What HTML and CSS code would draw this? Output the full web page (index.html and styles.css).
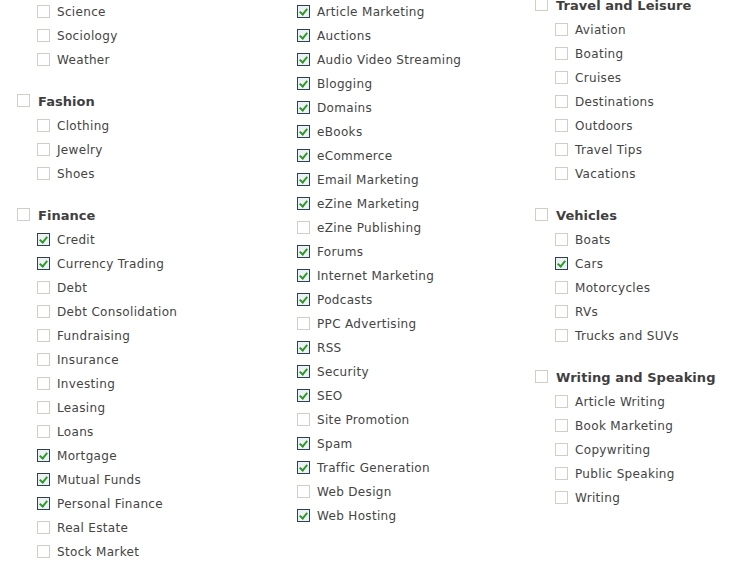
FILE: index.html
```html
<!DOCTYPE html>
<html lang="en">
  <head>
    <meta charset="UTF-8" />
    <meta name="viewport" content="width=device-width, initial-scale=1.0" />
    <title>Categories</title>
    <link rel="stylesheet" href="styles.css">
  </head>
  <body>
    <div class="columns">
      <div class="column">
        <ul class="subs">
          <li><label><input type="checkbox" />Science</label></li>
          <li><label><input type="checkbox" />Sociology</label></li>
          <li><label><input type="checkbox" />Weather</label></li>
        </ul>
        <div class="category">
          <label class="cat-title"><input type="checkbox" />Fashion</label>
          <ul class="subs">
            <li><label><input type="checkbox" />Clothing</label></li>
            <li><label><input type="checkbox" />Jewelry</label></li>
            <li><label><input type="checkbox" />Shoes</label></li>
          </ul>
        </div>
        <div class="category">
          <label class="cat-title"><input type="checkbox" />Finance</label>
          <ul class="subs">
            <li><label><input type="checkbox" checked />Credit</label></li>
            <li><label><input type="checkbox" checked />Currency Trading</label></li>
            <li><label><input type="checkbox" />Debt</label></li>
            <li><label><input type="checkbox" />Debt Consolidation</label></li>
            <li><label><input type="checkbox" />Fundraising</label></li>
            <li><label><input type="checkbox" />Insurance</label></li>
            <li><label><input type="checkbox" />Investing</label></li>
            <li><label><input type="checkbox" />Leasing</label></li>
            <li><label><input type="checkbox" />Loans</label></li>
            <li><label><input type="checkbox" checked />Mortgage</label></li>
            <li><label><input type="checkbox" checked />Mutual Funds</label></li>
            <li><label><input type="checkbox" checked />Personal Finance</label></li>
            <li><label><input type="checkbox" />Real Estate</label></li>
            <li><label><input type="checkbox" />Stock Market</label></li>
          </ul>
        </div>
      </div>

      <div class="column">
        <ul class="subs">
          <li><label><input type="checkbox" checked />Article Marketing</label></li>
          <li><label><input type="checkbox" checked />Auctions</label></li>
          <li><label><input type="checkbox" checked />Audio Video Streaming</label></li>
          <li><label><input type="checkbox" checked />Blogging</label></li>
          <li><label><input type="checkbox" checked />Domains</label></li>
          <li><label><input type="checkbox" checked />eBooks</label></li>
          <li><label><input type="checkbox" checked />eCommerce</label></li>
          <li><label><input type="checkbox" checked />Email Marketing</label></li>
          <li><label><input type="checkbox" checked />eZine Marketing</label></li>
          <li><label><input type="checkbox" />eZine Publishing</label></li>
          <li><label><input type="checkbox" checked />Forums</label></li>
          <li><label><input type="checkbox" checked />Internet Marketing</label></li>
          <li><label><input type="checkbox" checked />Podcasts</label></li>
          <li><label><input type="checkbox" />PPC Advertising</label></li>
          <li><label><input type="checkbox" checked />RSS</label></li>
          <li><label><input type="checkbox" checked />Security</label></li>
          <li><label><input type="checkbox" checked />SEO</label></li>
          <li><label><input type="checkbox" />Site Promotion</label></li>
          <li><label><input type="checkbox" checked />Spam</label></li>
          <li><label><input type="checkbox" checked />Traffic Generation</label></li>
          <li><label><input type="checkbox" />Web Design</label></li>
          <li><label><input type="checkbox" checked />Web Hosting</label></li>
        </ul>
      </div>

      <div class="column column-top">
        <div class="category first">
          <label class="cat-title"><input type="checkbox" />Travel and Leisure</label>
          <ul class="subs">
            <li><label><input type="checkbox" />Aviation</label></li>
            <li><label><input type="checkbox" />Boating</label></li>
            <li><label><input type="checkbox" />Cruises</label></li>
            <li><label><input type="checkbox" />Destinations</label></li>
            <li><label><input type="checkbox" />Outdoors</label></li>
            <li><label><input type="checkbox" />Travel Tips</label></li>
            <li><label><input type="checkbox" />Vacations</label></li>
          </ul>
        </div>
        <div class="category">
          <label class="cat-title"><input type="checkbox" />Vehicles</label>
          <ul class="subs">
            <li><label><input type="checkbox" />Boats</label></li>
            <li><label><input type="checkbox" checked />Cars</label></li>
            <li><label><input type="checkbox" />Motorcycles</label></li>
            <li><label><input type="checkbox" />RVs</label></li>
            <li><label><input type="checkbox" />Trucks and SUVs</label></li>
          </ul>
        </div>
        <div class="category">
          <label class="cat-title"><input type="checkbox" />Writing and Speaking</label>
          <ul class="subs">
            <li><label><input type="checkbox" />Article Writing</label></li>
            <li><label><input type="checkbox" />Book Marketing</label></li>
            <li><label><input type="checkbox" />Copywriting</label></li>
            <li><label><input type="checkbox" />Public Speaking</label></li>
            <li><label><input type="checkbox" />Writing</label></li>
          </ul>
        </div>
      </div>
    </div>
  </body>
</html>
```

FILE: styles.css
```css
* {
  margin: 0;
  padding: 0;
  box-sizing: border-box;
}
body {
  background: #fff;
  color: #444;
  font-family: "DejaVu Sans", Verdana, sans-serif;
  font-size: 12px;
  letter-spacing: 0.33px;
  overflow: hidden;
}
.columns {
  display: grid;
  grid-template-columns: 260px 258px 1fr;
  padding-left: 17px;
}
.column-top {
  margin-top: -6px;
}
ul {
  list-style: none;
}
label {
  display: flex;
  align-items: center;
  height: 24px;
  cursor: pointer;
  white-space: nowrap;
}
.subs {
  padding-left: 20px;
}
.subs label input {
  margin-right: 7px;
}
.category {
  margin-top: 18px;
}
.category.first {
  margin-top: 0;
}
.cat-title {
  font-weight: bold;
  font-size: 13px;
  letter-spacing: 0.05px;
  color: #3f3f3f;
  padding-bottom: 2px;
}
.cat-title input {
  margin-right: 8px;
}

input[type="checkbox"] {
  appearance: none;
  -webkit-appearance: none;
  flex: none;
  position: relative;
  width: 13px;
  height: 13px;
  border: 1px solid #cfcfc8;
  background: #fff;
  margin-top: -2px;
}
input[type="checkbox"]:checked {
  border-color: #2f4150;
  background: #eef1f2;
}
input[type="checkbox"]:checked::after {
  content: "";
  position: absolute;
  left: 3px;
  top: 1px;
  width: 3px;
  height: 6px;
  border-right: 2px solid #2e9a2e;
  border-bottom: 2px solid #2e9a2e;
  transform: rotate(40deg);
}
```
